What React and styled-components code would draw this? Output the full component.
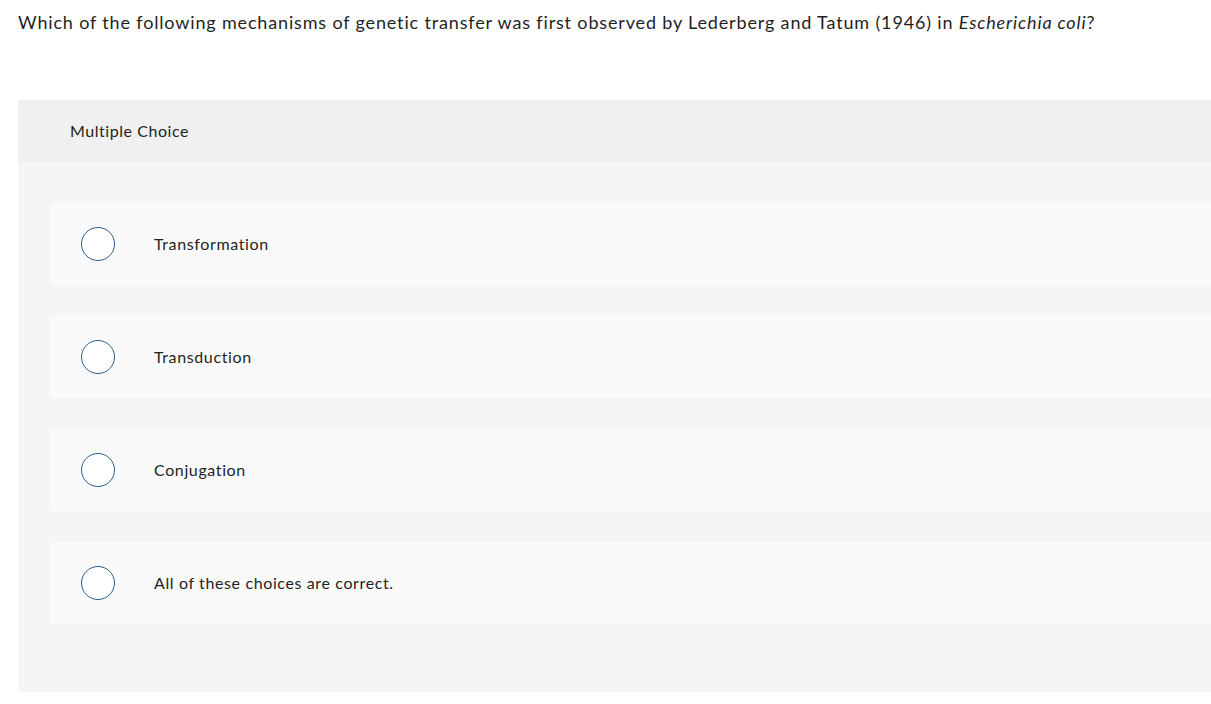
import React from 'react'
import styled, { createGlobalStyle } from 'styled-components'

const GlobalStyle = createGlobalStyle`
  html, body {
    margin: 0;
    padding: 0;
    background: #ffffff;
    overflow: hidden;
  }
  body {
    font-family: Lato, "Open Sans", sans-serif;
    color: #1f1f1f;
  }
`

const Page = styled.div`
  width: 1211px;
  height: 704px;
  overflow: hidden;
  padding: 9px 0 0 18px;
  box-sizing: border-box;
`

const Question = styled.p`
  margin: 0;
  font-size: 18px;
  line-height: 26px;
  letter-spacing: 0.84px;
  color: #1f1f1f;
  em {
    font-style: italic;
  }
`

const Card = styled.section`
  margin-top: 65px;
  width: 1240px;
  background: #f5f5f5;
  border-radius: 4px;
  padding-bottom: 68px;
`

const CardHeader = styled.div`
  height: 62px;
  box-sizing: border-box;
  display: flex;
  align-items: center;
  padding: 0 0 2px 52px;
  background: #f0f0f0;
  border-radius: 4px 4px 0 0;
  font-size: 16px;
  letter-spacing: 0.55px;
  color: #1f1f1f;
`

const Options = styled.ul`
  list-style: none;
  margin: 0;
  padding: 41px 0 0 32px;
  display: flex;
  flex-direction: column;
  gap: 31px;
`

const Option = styled.li`
  height: 82px;
  display: flex;
  align-items: center;
  background: #fafafa;
  border-radius: 4px;
  padding-left: 31px;
  cursor: pointer;
`

const Radio = styled.span`
  width: 32px;
  height: 32px;
  border-radius: 50%;
  border: 1.5px solid #2b5d8c;
  background: #ffffff;
  flex-shrink: 0;
`

const Label = styled.span`
  margin-left: 39px;
  padding-bottom: 2px;
  font-size: 16px;
  letter-spacing: 0.62px;
  color: #1f1f1f;
`

const choices = [
  'Transformation',
  'Transduction',
  'Conjugation',
  'All of these choices are correct.'
]

export default function App() {
  return (
    <>
      <GlobalStyle />
      <Page>
        <Question>
          Which of the following mechanisms of genetic transfer was first observed by Lederberg and Tatum (1946) in <em>Escherichia coli</em>?
        </Question>
        <Card>
          <CardHeader>Multiple Choice</CardHeader>
          <Options>
            {choices.map(c => (
              <Option key={c}>
                <Radio />
                <Label>{c}</Label>
              </Option>
            ))}
          </Options>
        </Card>
      </Page>
    </>
  )
}
